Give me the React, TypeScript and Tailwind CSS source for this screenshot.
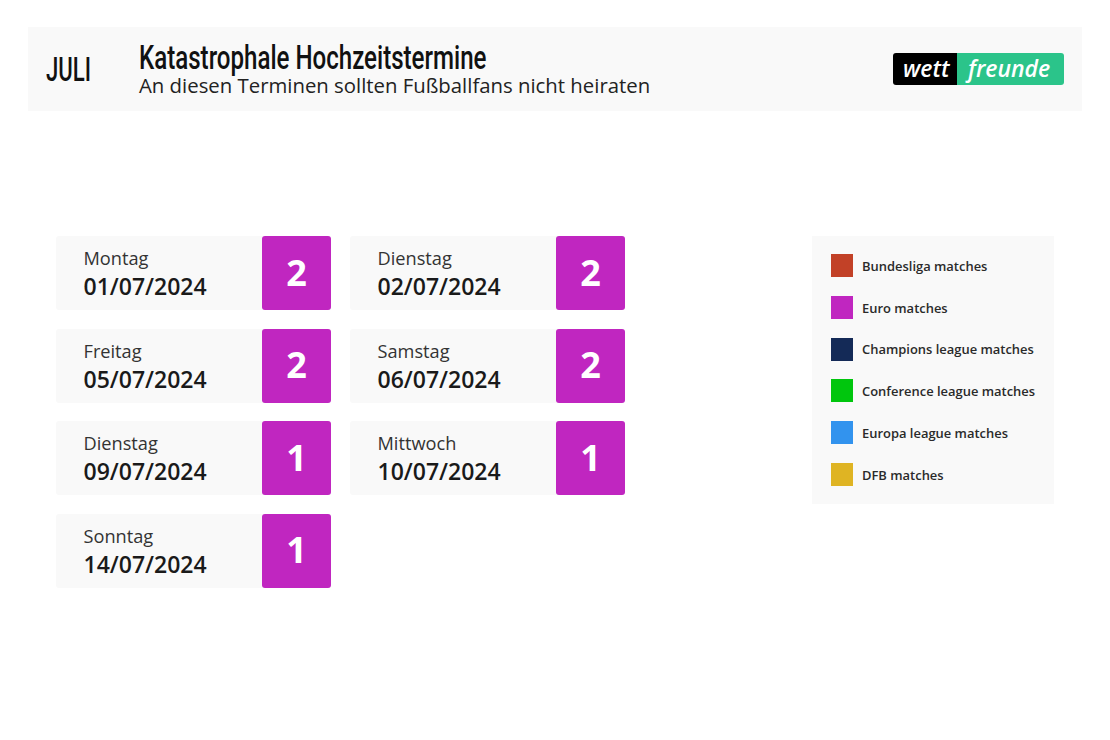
const days = [
  { name: 'Montag', date: '01/07/2024', count: 2 },
  { name: 'Dienstag', date: '02/07/2024', count: 2 },
  { name: 'Freitag', date: '05/07/2024', count: 2 },
  { name: 'Samstag', date: '06/07/2024', count: 2 },
  { name: 'Dienstag', date: '09/07/2024', count: 1 },
  { name: 'Mittwoch', date: '10/07/2024', count: 1 },
  { name: 'Sonntag', date: '14/07/2024', count: 1 },
];

const legend = [
  { label: 'Bundesliga matches', color: 'bg-[#c24127]' },
  { label: 'Euro matches', color: 'bg-[#c026c0]' },
  { label: 'Champions league matches', color: 'bg-[#142a57]' },
  { label: 'Conference league matches', color: 'bg-[#00c60d]' },
  { label: 'Europa league matches', color: 'bg-[#3293ee]' },
  { label: 'DFB matches', color: 'bg-[#dfb423]' },
];

function DayCard({ name, date, count }: { name: string; date: string; count: number }) {
  return (
    <div className="flex h-[74px] w-[275px] rounded-[3px] bg-[#f9f9f9]">
      <div className="flex-1 pl-[27.5px] pt-[9px]">
        <div className="text-[18.2px] leading-[26px] text-[#333333]">{name}</div>
        <div className="text-[23px] leading-[31px] font-semibold text-[#1a1a1a]">{date}</div>
      </div>
      <div className="flex w-[69px] items-center justify-center rounded-[3px] bg-[#c026c0] pb-[1px] text-[36px] font-bold text-white">
        {count}
      </div>
    </div>
  );
}

export default function App() {
  return (
    <div className="h-[740px] w-[1110px] overflow-hidden bg-white px-[28px] pt-[27px] font-['Open_Sans',sans-serif]">
      <header className="flex h-[84px] items-center bg-[#f9f9f9] pl-[18px] pr-[18px]">
        <div className="w-[93px] origin-left scale-x-[0.65] text-[34px] leading-none font-medium whitespace-nowrap text-[#111111] font-['Roboto',sans-serif]">
          JULI
        </div>
        <div className="flex-1">
          <div className="h-[31px] origin-left scale-x-[0.73] text-[33px] leading-[31px] font-medium whitespace-nowrap text-[#111111] font-['Roboto',sans-serif]">
            Katastrophale Hochzeitstermine
          </div>
          <div className="text-[20.35px] leading-[24px] whitespace-nowrap text-[#222222]">
            An diesen Terminen sollten Fußballfans nicht heiraten
          </div>
        </div>
        <div className="flex h-[32px] w-[171px] overflow-hidden rounded-[3px] text-[23px] leading-[30px] font-semibold text-white italic">
          <div className="w-[64px] bg-black pl-[10px]">wett</div>
          <div className="flex-1 bg-[#2bc48a] pl-[11px]">freunde</div>
        </div>
      </header>

      <main className="mt-[125px] flex justify-between px-[28px]">
        <div className="grid h-fit grid-cols-[275px_275px] gap-x-[19px] gap-y-[18.5px]">
          {days.map((day) => (
            <DayCard key={day.date} {...day} />
          ))}
        </div>
        <aside className="flex h-[268px] w-[242px] flex-col gap-[18.8px] bg-[#f9f9f9] pl-[19px] pt-[18px]">
          {legend.map((item) => (
            <div key={item.label} className="flex h-[23px] items-center gap-[9px]">
              <span className={`h-[23px] w-[22px] ${item.color}`} />
              <span className="pt-[2px] text-[12.95px] font-semibold whitespace-nowrap text-[#2a2a2a]">{item.label}</span>
            </div>
          ))}
        </aside>
      </main>
    </div>
  );
}
